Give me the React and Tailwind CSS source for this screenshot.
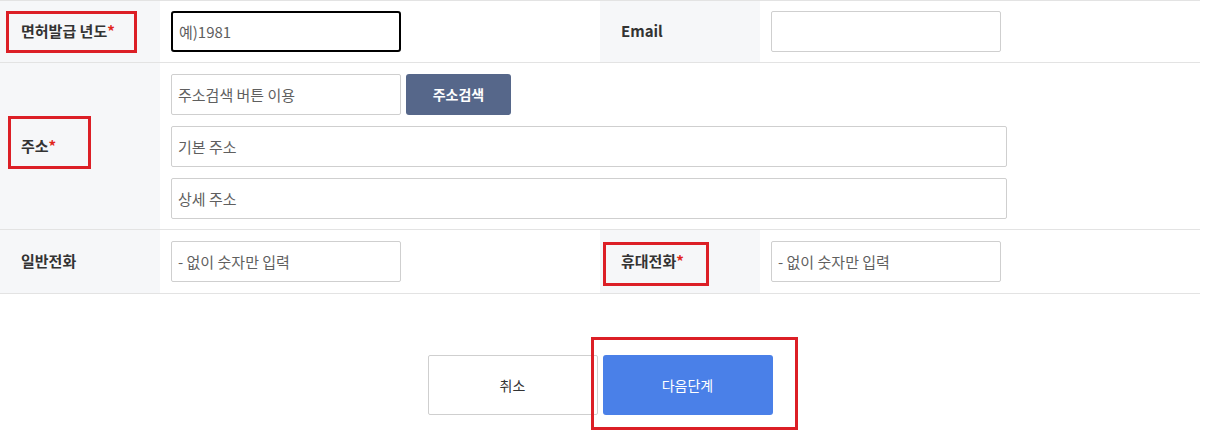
import { useState } from 'react';

// 입력 폼 마지막 단계 (면허/주소/연락처)
const font = { fontFamily: '"Noto Sans CJK KR", "Noto Sans", sans-serif' };

function Label({ children, required }) {
  return (
    <div className="flex items-center bg-[#f6f7f9] pl-[21px] text-[15px] font-bold text-[#333]">
      <span>
        {children}
        {required && <span className="text-[#e1251b]">*</span>}
      </span>
    </div>
  );
}

function Field({ placeholder, className = '', focused = false }) {
  return (
    <input
      type="text"
      placeholder={placeholder}
      className={`h-[41px] bg-white px-[6px] text-[15px] text-[#333] placeholder:text-[#5f5f5f] outline-none ${
        focused ? 'rounded-[3px] border-2 border-black' : 'rounded-[2px] border border-[#cfcfcf]'
      } ${className}`}
      style={font}
    />
  );
}

function Mark({ className }) {
  return <div className={`pointer-events-none absolute border-[3px] border-[#dc1f26] ${className}`} />;
}

export default function App() {
  const [step] = useState(1);

  return (
    <div className="h-[444px] w-[1228px] bg-white" style={font}>
      <div className="relative w-[1200px]">
        <div className="grid grid-cols-[160px_440px_160px_440px] border-t border-[#e3e3e3]">
          {/* row 1 */}
          <Label required>면허발급 년도</Label>
          <div className="py-[10px] pl-[11px]">
            <Field placeholder="예)1981" focused className="w-[230px]" />
          </div>
          <Label>Email</Label>
          <div className="py-[10px] pl-[11px]">
            <Field className="w-[230px]" />
          </div>

          {/* row 2 */}
          <div className="col-span-4 grid grid-cols-[160px_1040px] border-t border-[#e3e3e3]">
            <Label required>주소</Label>
            <div className="flex flex-col gap-[11px] pb-[10px] pt-[11px] pl-[11px]">
              <div className="flex gap-[5px]">
                <Field placeholder="주소검색 버튼 이용" className="w-[230px]" />
                <button className="h-[41px] w-[105px] rounded-[3px] bg-[#56678a] text-[14px] font-bold text-white">
                  주소검색
                </button>
              </div>
              <Field placeholder="기본 주소" className="w-[836px]" />
              <Field placeholder="상세 주소" className="w-[836px]" />
            </div>
          </div>

          {/* row 3 */}
          <div className="col-span-4 grid grid-cols-[160px_440px_160px_440px] border-y border-[#e3e3e3]">
            <Label>일반전화</Label>
            <div className="py-[11px] pl-[11px]">
              <Field placeholder="- 없이 숫자만 입력" className="w-[230px]" />
            </div>
            <Label required>휴대전화</Label>
            <div className="py-[11px] pl-[11px]">
              <Field placeholder="- 없이 숫자만 입력" className="w-[230px]" />
            </div>
          </div>
        </div>

        {/* buttons */}
        <div className="mt-[61px] flex justify-center gap-[5px]">
          <button className="h-[60px] w-[170px] rounded-[2px] border border-[#cfcfcf] bg-white text-[14px] text-[#333]">
            취소
          </button>
          <button className="h-[60px] w-[170px] rounded-[3px] bg-[#4a80e8] text-[14px] text-white">
            {step === 1 ? '다음단계' : '완료'}
          </button>
        </div>

        {/* annotation boxes */}
        <Mark className="left-[6px] top-[11px] h-[42px] w-[131px]" />
        <Mark className="left-[8px] top-[116px] h-[53px] w-[83px]" />
        <Mark className="left-[603px] top-[242px] h-[44px] w-[106px]" />
        <Mark className="left-[591px] top-[337px] h-[93px] w-[207px]" />
      </div>
    </div>
  );
}
